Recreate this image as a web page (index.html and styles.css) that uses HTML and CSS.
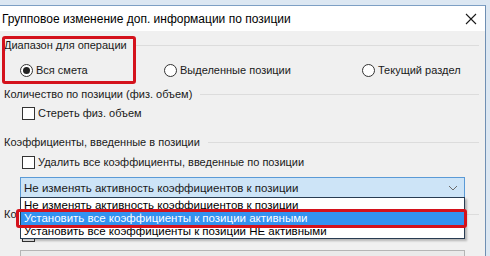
FILE: index.html
```html
<!DOCTYPE html>
<html>

<head>
    <title>Групповое изменение доп. информации по позиции</title>
    <link rel="stylesheet" href="styles.css">
</head>

<body>
    <div class="window">
        <div class="titlebar">
            <span class="title">Групповое изменение доп. информации по позиции</span>
            <svg class="close" width="12" height="12" viewBox="0 0 12 12">
                <path d="M1 1 L11 11 M11 1 L1 11" stroke="#1a1a1a" stroke-width="1.1" fill="none" />
            </svg>
        </div>

        <div class="content">
            <div class="group-head">
                <span>Диапазон для операции</span>
                <span class="rule"></span>
            </div>
            <div class="radios">
                <label class="radio"><span class="dot checked"></span>Вся смета</label>
                <label class="radio"><span class="dot"></span>Выделенные позиции</label>
                <label class="radio"><span class="dot"></span>Текущий раздел</label>
            </div>

            <div class="group-head gap-8">
                <span>Количество по позиции (физ. объем)</span>
                <span class="rule"></span>
            </div>
            <label class="check gap-3"><span class="box"></span>Стереть физ. объем</label>

            <div class="group-head gap-13">
                <span>Коэффициенты, введенные в позиции</span>
                <span class="rule"></span>
            </div>
            <label class="check gap-4"><span class="box"></span>Удалить все коэффициенты, введенные по позиции</label>

            <div class="combo">
                <span>Не изменять активность коэффициентов к позиции</span>
                <svg width="10" height="6" viewBox="0 0 10 6">
                    <path d="M1 1 L5 5 L9 1" stroke="#6b6b6b" stroke-width="1" fill="none" />
                </svg>
            </div>

            <!-- group hidden behind the open list, only its edge shows -->
            <div class="group-head gap-8">
                <span>Ко</span>
                <span class="rule"></span>
            </div>
            <div class="check gap-5"><span class="box"></span></div>

            <div class="combo disabled"></div>
        </div>

        <ul class="dropdown">
            <li>Не изменять активность коэффициентов к позиции</li>
            <li class="selected">Установить все коэффициенты к позиции активными</li>
            <li>Установить все коэффициенты к позиции НЕ активными</li>
        </ul>

        <div class="mark mark-group"></div>
        <div class="mark mark-item"></div>
    </div>
</body>

</html>
```

FILE: styles.css
```css
body {
    margin: 0;
    background: #dce7f2;
    font-family: "Liberation Sans", Arial, sans-serif;
    font-size: 11px;
    color: #1a1a1a;
    height: 256px;
    overflow: hidden;
}

.window {
    position: relative;
    margin-top: 5px;
    width: 486px;
    height: 251px;
    overflow: hidden;
    box-sizing: border-box;
    border-top: 1px solid #7d9fc4;
    border-right: 1px solid #6f8fb3;
    background: #f0f0f0;
}

.titlebar {
    height: 25px;
    background: #fff;
    display: flex;
    align-items: center;
    justify-content: space-between;
    padding: 0 8px 0 2px;
}

.title {
    font-size: 12px;
    color: #000;
}

.content {
    padding: 6px 6px 0 0;
}

.group-head {
    height: 16px;
    display: flex;
    align-items: center;
    gap: 8px;
    padding-left: 4px;
}

.rule {
    flex: 1;
    border-top: 1px solid #dcdcdc;
}

.gap-3 { margin-top: 3px; }
.gap-4 { margin-top: 4px; }
.gap-5 { margin-top: 5px; }
.gap-8 { margin-top: 8px; }
.gap-13 { margin-top: 13px; }

.radios {
    margin-top: 9px;
    height: 16px;
    display: grid;
    grid-template-columns: 144px 198px auto;
    padding-left: 20px;
}

.radio,
.check {
    display: flex;
    align-items: center;
    gap: 3px;
    height: 16px;
}

.dot {
    width: 11px;
    height: 11px;
    border: 1px solid #333;
    border-radius: 50%;
    background: #fff;
    display: flex;
    align-items: center;
    justify-content: center;
}

.dot.checked::after {
    content: "";
    width: 7px;
    height: 7px;
    border-radius: 50%;
    background: #222;
}

.check {
    padding-left: 22px;
}

.box {
    width: 11px;
    height: 11px;
    border: 1px solid #333;
    background: #fff;
}

.combo {
    margin: 7px 0 0 20px;
    width: 445px;
    height: 21px;
    box-sizing: border-box;
    border: 1px solid #5a9ad6;
    background: #cde4f7;
    display: flex;
    align-items: center;
    justify-content: space-between;
    padding: 0 6px 0 3px;
    font-size: 11.5px;
}

.combo.disabled {
    margin-top: 7px;
    border-color: #b5b5b5;
    background: #eaeaea;
}

.dropdown {
    position: absolute;
    left: 20px;
    top: 191px;
    width: 445px;
    height: 42px;
    box-sizing: border-box;
    margin: 0;
    padding: 1px 0;
    list-style: none;
    background: #fff;
    border: 1px solid #283c52;
    box-shadow: 2px 2px 2px rgba(0, 0, 0, 0.25);
    font-size: 11.5px;
}

.dropdown li {
    height: 13px;
    line-height: 13px;
    padding-left: 3px;
    color: #000;
}

.dropdown li.selected {
    background: #3392f0;
    color: #fff;
}

.mark {
    position: absolute;
    border: 3px solid #d4121c;
    border-radius: 3px;
    box-sizing: border-box;
}

.mark-group {
    left: 2px;
    top: 30px;
    width: 134px;
    height: 48px;
}

.mark-item {
    left: 16px;
    top: 203px;
    width: 451px;
    height: 19px;
}
```
